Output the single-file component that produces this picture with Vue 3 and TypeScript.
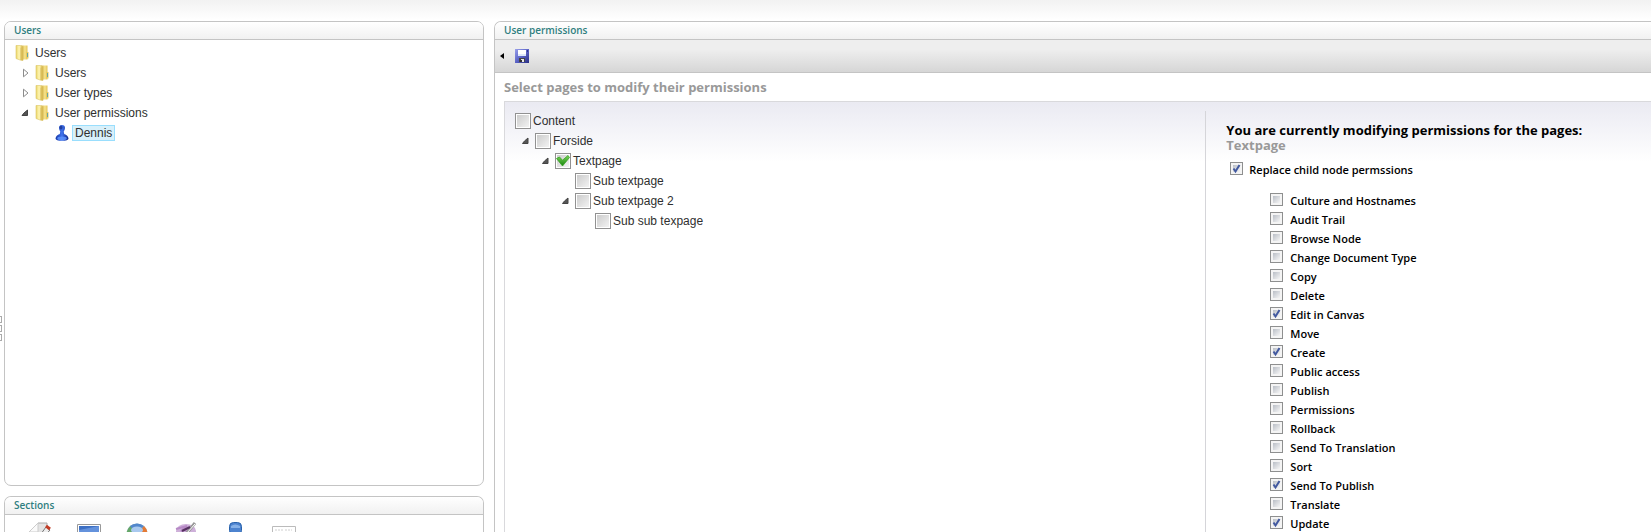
<script setup lang="ts">
import { ref } from 'vue'

interface TreeNode {
  id: string
  label: string
  level: number
  state: 'root' | 'open' | 'closed' | 'leaf'
}

interface PageNode {
  id: string
  label: string
  level: number
  open: boolean
  checked: boolean
}

interface Permission {
  label: string
  checked: boolean
}

const users: TreeNode[] = [
  { id: 'root', label: 'Users', level: 0, state: 'root' },
  { id: 'users', label: 'Users', level: 1, state: 'closed' },
  { id: 'types', label: 'User types', level: 1, state: 'closed' },
  { id: 'perms', label: 'User permissions', level: 1, state: 'open' },
  { id: 'dennis', label: 'Dennis', level: 2, state: 'leaf' },
]

const pages = ref<PageNode[]>([
  { id: 'content', label: 'Content', level: 0, open: false, checked: false },
  { id: 'forside', label: 'Forside', level: 1, open: true, checked: false },
  { id: 'textpage', label: 'Textpage', level: 2, open: true, checked: true },
  { id: 'sub1', label: 'Sub textpage', level: 3, open: false, checked: false },
  { id: 'sub2', label: 'Sub textpage 2', level: 3, open: true, checked: false },
  { id: 'subsub', label: 'Sub sub texpage', level: 4, open: false, checked: false },
])

const replaceChildren = ref(true)

const granted = ['Edit in Canvas', 'Create', 'Send To Publish', 'Update']
const permissions = ref<Permission[]>(
  [
    'Culture and Hostnames', 'Audit Trail', 'Browse Node', 'Change Document Type', 'Copy',
    'Delete', 'Edit in Canvas', 'Move', 'Create', 'Public access', 'Publish', 'Permissions',
    'Rollback', 'Send To Translation', 'Sort', 'Send To Publish', 'Translate', 'Update',
  ].map((label) => ({ label, checked: granted.includes(label) })),
)
</script>

<template>
  <div class="page">
    <div class="splitter" aria-hidden="true"><i></i><i></i><i></i></div>

    <aside class="sidebar">
      <section class="panel users-panel">
        <h2 class="panel-title">Users</h2>
        <ul class="tree">
          <li v-for="n in users" :key="n.id" class="node" :class="'level-' + n.level">
            <button v-if="n.state === 'open' || n.state === 'closed'" class="toggle" type="button" :aria-label="'Toggle ' + n.label">
              <svg v-if="n.state === 'closed'" width="8" height="10" viewBox="0 0 8 10"><path d="M2.500 1.200V8.800L7 5Z" fill="#fff" stroke="#8c8c8c" /></svg>
              <svg v-else width="8" height="8" viewBox="0 0 8 8"><path d="M6.500 1V6.500H1L3 4Z" fill="#555" stroke="#444" stroke-linejoin="round" /></svg>
            </button>
            <span v-else-if="n.state === 'leaf'" class="toggle"></span>
            <svg v-if="n.state === 'leaf'" class="icon" width="16" height="18" viewBox="0 0 16 18">
              <defs>
                <linearGradient id="person" x1="0" x2="1"><stop offset="0" stop-color="#1535a5" /><stop offset=".5" stop-color="#3f73ee" /><stop offset="1" stop-color="#0c2284" /></linearGradient>
              </defs>
              <path d="M4 4Q4 1 7 1T10 4Q9.800 6.500 8.700 7.500L9.200 10Q13 11 13.500 14.500Q13.300 16.800 7 16.800T.5 14.500Q1 11 4.800 10L5.300 7.500Q4.200 6.500 4 4Z" fill="url(#person)" />
              <ellipse cx="6" cy="3.600" rx="1.500" ry="2" fill="#233f9d" />
              <ellipse cx="7" cy="14.300" rx="4.800" ry="1.900" fill="#5f96ff" opacity=".8" />
            </svg>
            <svg v-else class="icon" width="16" height="18" viewBox="0 0 16 18">
              <defs>
                <linearGradient id="flap" x1="0" x2="1"><stop offset="0" stop-color="#e9d66a" /><stop offset=".45" stop-color="#fff6b4" /><stop offset="1" stop-color="#d5b448" /></linearGradient>
                <linearGradient id="back" x1="0" x2="1"><stop offset="0" stop-color="#d0aa3c" /><stop offset=".6" stop-color="#f7e48c" /><stop offset="1" stop-color="#e2c25a" /></linearGradient>
              </defs>
              <path d="M6 1.500H12.500V15.500H6Z" fill="url(#back)" />
              <path d="M11 8H13.500V14.500H11Z" fill="#e8ca5d" />
              <path d="M12 9H13V13H12Z" fill="#6ba3a4" />
              <path d="M1 1.500H5.500L8 3V16.500L5 16L1 14.500Z" fill="url(#flap)" stroke="#dcc566" stroke-width=".6" />
              <path d="M5.500 4L7.500 2.500V16.500L5.500 16Z" fill="#d3b54c" opacity=".6" />
            </svg>
            <a href="#" class="link" :class="{ selected: n.state === 'leaf' }">{{ n.label }}</a>
          </li>
        </ul>
      </section>

      <section class="panel sections-panel">
        <h2 class="panel-title">Sections</h2>
        <nav class="sections">
          <a href="#" aria-label="Content">
            <svg width="32" height="32" viewBox="0 0 32 32"><path d="M14 1H23V28H5V10Z" fill="#e4e4e4" stroke="#aaa" /><path d="M14 1V10H5Z" fill="#fafafa" stroke="#ccc" /><path d="M14 16L22 5L26 8L17 18Z" fill="#eee" stroke="#777" /><path d="M22 4L26 7" stroke="#c33c25" stroke-width="3" /></svg>
          </a>
          <a href="#" aria-label="Media">
            <svg width="32" height="32" viewBox="0 0 32 32"><path d="M4.500 2.500H27.500V28H4.500Z" fill="#fff" stroke="#999" /><path d="M6 4H26V26H6Z" fill="#3d70c4" /><path d="M6 8L26 4V26H6Z" fill="#6492dc" /></svg>
          </a>
          <a href="#" aria-label="Users">
            <svg width="32" height="32" viewBox="0 0 32 32"><circle cx="15" cy="12" r="10.500" fill="#9bc" /><path d="M4.500 12A10.500 10.500 0 0 1 9 3.500L15 12Z" fill="#65a767" /><path d="M8 4.100A10.500 10.500 0 0 1 22 4.100L15 12Z" fill="#5287cc" /><path d="M22 4.100A10.500 10.500 0 0 1 25.500 12H15Z" fill="#e47a35" /><ellipse cx="15" cy="8" rx="6" ry="3.500" fill="#a9c9ef" /></svg>
          </a>
          <a href="#" aria-label="Settings">
            <svg width="32" height="32" viewBox="0 0 32 32"><ellipse cx="15" cy="9" rx="10" ry="7" fill="#ceb0d9" /><path d="M5 7L16 4L10 9L21 6L13 12" fill="none" stroke="#b78ac6" stroke-width="2" /><path d="M15 12L24 1" stroke="#999" stroke-width="3" /><path d="M16 11L24 2" stroke="#fff" /><path d="M11 9L19 5" stroke="#54305f" stroke-width="2" /></svg>
          </a>
          <a href="#" aria-label="Members">
            <svg width="32" height="32" viewBox="0 0 32 32"><rect x="9.500" y=".500" width="12" height="12" rx="4" fill="#4d83cf" stroke="#2862ac" /><path d="M11 4Q15 1 20 4V6H11Z" fill="#86b1e8" /></svg>
          </a>
          <a href="#" aria-label="Translation">
            <svg width="32" height="32" viewBox="0 0 32 32"><path d="M3.500 4.500H26.500V28H3.500Z" fill="#fff" stroke="#bbb" /><path d="M6 8H14M16 8H23" stroke="#d0d0d0" stroke-dasharray="2 1" /></svg>
          </a>
        </nav>
      </section>
    </aside>

    <main class="panel main-panel">
      <h2 class="panel-title">User permissions</h2>
      <div class="toolbar">
        <button type="button" class="tool collapse" aria-label="Scroll left">
          <svg width="4" height="6" viewBox="0 0 4 6"><path d="M4 0V6L0 3Z" fill="#000" /></svg>
        </button>
        <button type="button" class="tool" aria-label="Save">
          <svg width="14" height="14" viewBox="0 0 14 14">
            <defs><linearGradient id="disk" x1="0" x2="1" y1="0" y2="1"><stop offset="0" stop-color="#9ba1ea" /><stop offset=".5" stop-color="#5c64c6" /><stop offset="1" stop-color="#292e83" /></linearGradient></defs>
            <rect width="14" height="14" fill="url(#disk)" />
            <path d="M3 1H11V7H3Z" fill="#fff" /><path d="M3 5H11V7H3Z" fill="#dfe9fa" />
            <path d="M4 9H10V13H4Z" fill="#444" /><path d="M6 10H9V13H6Z" fill="#e8e8e8" /><path d="M5 11H7V13H5Z" fill="#333" />
            <path d="M12 1H13V3H12Z" fill="#30368c" />
          </svg>
        </button>
      </div>
      <h3 class="heading">Select pages to modify their permissions</h3>

      <div class="editor">
        <ul class="page-tree">
          <li v-for="p in pages" :key="p.id" class="node" :class="'level-' + p.level">
            <button v-if="p.open" class="toggle" type="button" :aria-label="'Toggle ' + p.label">
              <svg width="8" height="8" viewBox="0 0 8 8"><path d="M7 1V6.500H1.500L3.500 4Z" fill="#555" stroke="#444" stroke-linejoin="round" /></svg>
            </button>
            <span v-else-if="p.level > 0" class="toggle"></span>
            <label class="page-label">
              <span class="tick">
                <input v-model="p.checked" type="checkbox" class="page-box" />
                <svg v-if="p.checked" class="mark" width="16" height="16" viewBox="0 0 16 16">
                  <defs><linearGradient id="green" x1="0" x2="0" y1="0" y2="1"><stop offset="0" stop-color="#7bd45b" /><stop offset="1" stop-color="#17850c" /></linearGradient></defs>
                  <path d="M1.500 5.500L4.500 4L7.500 7.200L13 2.500L14.500 4.500L7.500 13Z" fill="url(#green)" stroke="#36a322" stroke-width=".8" />
                </svg>
              </span>
              {{ p.label }}
            </label>
          </li>
        </ul>

        <section class="rights">
          <h3 class="rights-title">You are currently modifying permissions for the pages:</h3>
          <p class="rights-page">Textpage</p>
          <label class="check replace">
            <span class="tick">
              <input v-model="replaceChildren" type="checkbox" class="box" />
              <svg v-if="replaceChildren" class="mark" width="13" height="13" viewBox="0 0 13 13"><path d="M3.500 6.500L5.500 9.500L9.500 3" fill="none" stroke="#4259a0" stroke-width="2" /></svg>
            </span>
            <span>Replace child node permssions</span>
          </label>
          <ul class="rights-list">
            <li v-for="r in permissions" :key="r.label">
              <label class="check">
                <span class="tick">
                  <input v-model="r.checked" type="checkbox" class="box" />
                  <svg v-if="r.checked" class="mark" width="13" height="13" viewBox="0 0 13 13"><path d="M3.500 6.500L5.500 9.500L9.500 3" fill="none" stroke="#4259a0" stroke-width="2" /></svg>
                </span>
                <span>{{ r.label }}</span>
              </label>
            </li>
          </ul>
        </section>
      </div>
    </main>
  </div>
</template>

<style>
body {
  margin: 0;
  background: #fff;
}
</style>

<style scoped>
.page {
  position: relative;
  display: flex;
  gap: 10px;
  box-sizing: border-box;
  height: 100vh;
  padding: 21px 0 0 4px;
  overflow: hidden;
  background: linear-gradient(#f2f2f2, #fff 20px);
  color: #000;
  font-family: "Trebuchet MS", "Open Sans", sans-serif;
}
.splitter {
  position: absolute;
  left: 0;
  top: 316px;
  display: grid;
  gap: 2px;
}
.splitter i {
  box-sizing: border-box;
  width: 2px;
  height: 7px;
  border: 1px solid #aaa;
  border-left: 0;
}
.sidebar {
  display: flex;
  flex: 0 0 480px;
  flex-direction: column;
  gap: 10px;
}
.panel {
  box-sizing: border-box;
  overflow: hidden;
  border: 1px solid #c4c4c4;
  border-radius: 7px;
  background: #fff;
}
.users-panel {
  flex: 1;
}
.sections-panel {
  flex: 0 0 36px;
  border-bottom: 0;
  border-radius: 7px 7px 0 0;
}
.main-panel {
  display: flex;
  flex: 1;
  flex-direction: column;
  border-right: 0;
  border-bottom: 0;
  border-radius: 7px 0 0 0;
}
.panel-title {
  flex: none;
  height: 17px;
  margin: 0;
  padding-left: 9px;
  border-bottom: 1px solid #c4c4c4;
  background: linear-gradient(#fff, #f1f1f1);
  color: #2f7f80;
  font-size: 10px;
  font-weight: 600;
  line-height: 17px;
}
ul {
  margin: 0;
  padding: 0;
  list-style: none;
}
.tree {
  padding: 3px 0 0 10px;
}
.node {
  display: flex;
  align-items: center;
  height: 20px;
  color: #2f2f2f;
  font-family: "Liberation Sans", Arial, sans-serif;
  font-size: 12px;
  line-height: 16px;
}
.level-2 {
  padding-left: 20px;
}
.level-3 {
  padding-left: 40px;
}
.level-4 {
  padding-left: 60px;
}
.toggle {
  display: flex;
  flex: 0 0 20px;
  align-items: center;
  justify-content: center;
  height: 20px;
  padding: 0;
  border: 0;
  background: none;
}
.icon {
  flex: none;
  margin-right: 1px;
}
.link {
  padding: 0 3px;
  color: inherit;
  text-decoration: none;
}
.link.selected {
  padding: 0 2px;
  border: 1px solid #99defd;
  background: #d8f0fa;
  line-height: 14px;
}
.sections {
  display: flex;
  gap: 17px;
  padding: 7px 0 0 19px;
}
.sections a,
.sections svg {
  display: block;
}
.toolbar {
  display: flex;
  flex: none;
  gap: 11px;
  align-items: center;
  height: 32px;
  padding-left: 5px;
  border-bottom: 1px solid #c4c4c4;
  background: linear-gradient(#eee 30%, #d6d6d6);
}
.tool {
  display: flex;
  padding: 0;
  border: 0;
  background: none;
}
.heading {
  flex: none;
  margin: 0;
  padding: 4px 0 4px 9px;
  color: #999;
  font-size: 13px;
  font-weight: 700;
  line-height: 20px;
}
.editor {
  display: grid;
  flex: 1;
  grid-template-columns: 11fr 7fr;
  margin-left: 9px;
  padding-top: 9px;
  border: 1px solid #d9d9dc;
  border-right: 0;
  border-bottom: 0;
  background: linear-gradient(#eaeaf2, #fff 60px);
}
.page-tree {
  padding-left: 10px;
}
.page-label {
  display: flex;
  gap: 2px;
  align-items: center;
}
.tick {
  position: relative;
  display: block;
  flex: none;
}
.mark {
  position: absolute;
  top: 0;
  left: 0;
  pointer-events: none;
}
input {
  display: block;
  margin: 0;
  box-sizing: border-box;
  appearance: none;
}
.page-box {
  width: 16px;
  height: 16px;
  border: 1px solid #919191;
  background: linear-gradient(135deg, #ccc, #f2f2f2) content-box, #fff;
  padding: 1px;
}
.box {
  width: 13px;
  height: 13px;
  border: 1px solid #8e8f8f;
  padding: 2px;
  background: linear-gradient(135deg, #b9bec6, #f6f6f6) content-box, #f4f4f4;
}
.rights {
  padding: 12px 0 0 20px;
  border-left: 1px solid #d5d5d9;
}
.rights-title,
.rights-page {
  margin: 0;
  font-size: 13px;
  font-weight: 700;
  line-height: 15px;
}
.rights-page {
  color: #999;
}
.check {
  display: flex;
  gap: 7px;
  align-items: flex-start;
  height: 19px;
  font-size: 11px;
  font-weight: 600;
  line-height: 16px;
}
.replace {
  gap: 6px;
  margin: 9px 0 12px 4px;
}
.rights-list {
  padding-left: 44px;
}
</style>
